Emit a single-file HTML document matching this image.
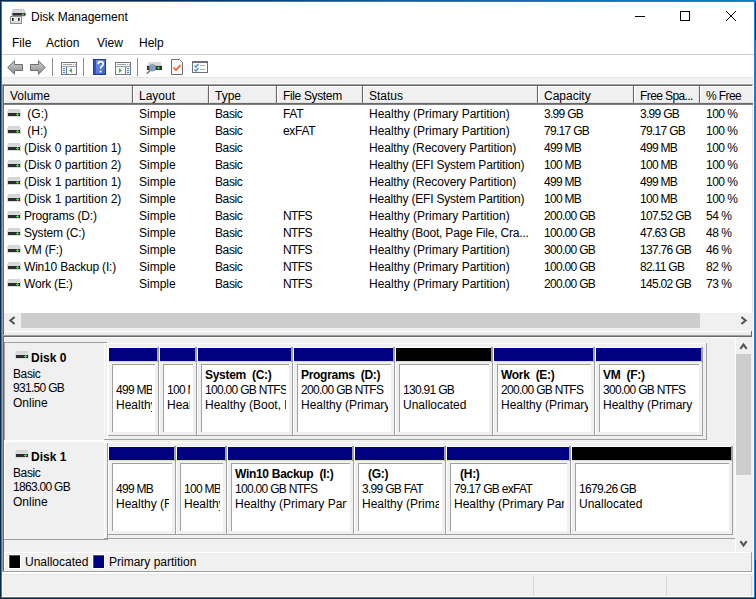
<!DOCTYPE html>
<html><head><meta charset="utf-8">
<style>
*{margin:0;padding:0;box-sizing:border-box}
html,body{width:756px;height:599px;overflow:hidden;background:#f0f0f0}
body{position:relative;font-family:"Liberation Sans",sans-serif;font-size:12px;color:#000}
.a{position:absolute}
.t{position:absolute;white-space:nowrap;line-height:17px;height:17px;margin-top:1px}
.b{font-weight:bold}
/* window frame */
#frame{left:0;top:0;width:756px;height:599px;border:1px solid #012b55;z-index:50;pointer-events:none}
#frame2{left:1px;top:1px;width:754px;height:597px;border:1px solid #1b84d8;z-index:50}

.hi{background:#f0f0f0;box-shadow:inset -1px -1px 0 #696969, inset 1px 1px 0 #fff, inset -2px -2px 0 #e3e3e3}
.cell{background:#f0f0f0;border-top:1px solid #fff;border-left:1px solid #fff;border-right:1px solid #a0a0a0;border-bottom:1px solid #a0a0a0}
.box{background:#fff;border-top:1px solid #a0a0a0;border-left:1px solid #a0a0a0}
</style></head><body>

<!-- title + menu white area -->
<div class="a" style="left:2px;top:2px;width:752px;height:52px;background:#fff"></div>
<div class="a" style="left:2px;top:54px;width:752px;height:1px;background:#cfcfcf"></div>
<div class="a" style="left:2px;top:55px;width:752px;height:22px;background:#fff"></div>
<div class="a" style="left:2px;top:77px;width:752px;height:1px;background:#e6e6e6"></div>

<!-- title icon -->
<svg class="a" style="left:10px;top:9px" width="16" height="15" viewBox="0 0 16 15">
  <path d="M3.5 0.5h10l1.5 3v3.5h-13v-3.5z" fill="#d6d8dc" stroke="#c2c4c8" stroke-width="1"/>
  <rect x="2.5" y="4" width="13" height="2.6" fill="#2e2e2e"/>
  <rect x="12" y="4.6" width="1.6" height="1.4" fill="#3cf03c"/>
  <rect x="0.5" y="7.5" width="11" height="7" fill="#ececec" stroke="#8f8f8f"/>
  <rect x="1" y="12" width="10" height="2" fill="#dcdcdc"/>
  <rect x="2" y="9" width="1.6" height="2.8" fill="#1a1a1a"/>
  <rect x="8" y="9" width="1.6" height="2.8" fill="#1a1a1a"/>
</svg>
<div class="t" style="left:31px;top:8px">Disk Management</div>

<!-- window buttons -->
<div class="a" style="left:635px;top:16px;width:10px;height:1px;background:#000"></div>
<div class="a" style="left:680px;top:11px;width:10px;height:10px;border:1px solid #000"></div>
<svg class="a" style="left:725px;top:10px" width="12" height="12" viewBox="0 0 12 12">
  <path d="M1 1L11 11M11 1L1 11" stroke="#000" stroke-width="1"/>
</svg>

<!-- menu -->
<div class="t" style="left:12px;top:34px">File</div>
<div class="t" style="left:46px;top:34px">Action</div>
<div class="t" style="left:97px;top:34px">View</div>
<div class="t" style="left:139px;top:34px">Help</div>

<!-- toolbar -->
<svg class="a" style="left:7px;top:60px" width="17" height="15" viewBox="0 0 17 15">
  <defs><linearGradient id="ga" x1="0" y1="0" x2="0" y2="1"><stop offset="0" stop-color="#cfcfcf"/><stop offset="1" stop-color="#8d8d8d"/></linearGradient></defs>
  <path d="M0.7 7.5L7.5 0.8V4.5H15.5V10.5H7.5V14.2Z" fill="url(#ga)" stroke="#6f6f6f" stroke-width="1" stroke-linejoin="round"/>
</svg>
<svg class="a" style="left:29px;top:60px" width="17" height="15" viewBox="0 0 17 15">
  <path d="M16.3 7.5L9.5 0.8V4.5H1.5V10.5H9.5V14.2Z" fill="url(#ga)" stroke="#6f6f6f" stroke-width="1" stroke-linejoin="round"/>
</svg>
<div class="a" style="left:52px;top:58px;width:1px;height:18px;background:#8a8a8a"></div>
<svg class="a" style="left:61px;top:62px" width="16" height="13" viewBox="0 0 16 13">
  <rect x="0.5" y="0.5" width="15" height="12" fill="#fafafa" stroke="#737880"/>
  <rect x="2" y="2" width="9" height="1" fill="#9ca1a8"/><rect x="12" y="2" width="1" height="1" fill="#9ca1a8"/><rect x="14" y="2" width="1" height="1" fill="#9ca1a8"/>
  <rect x="1" y="4" width="14" height="1" fill="#9ca1a8"/>
  <rect x="5" y="5" width="1" height="7" fill="#737880"/>
  <rect x="1" y="5" width="4" height="7" fill="#eef1f5"/>
  <rect x="2" y="6" width="2" height="1" fill="#3a8ad8"/><rect x="2" y="8" width="2" height="1" fill="#3a8ad8"/><rect x="2" y="10" width="2" height="1" fill="#3a8ad8"/>
  <path d="M8 8.5L11 6V11Z" fill="#2fbf2f"/>
</svg>
<div class="a" style="left:83px;top:58px;width:1px;height:18px;background:#8a8a8a"></div>
<svg class="a" style="left:93px;top:59px" width="13" height="16" viewBox="0 0 13 16">
  <defs><linearGradient id="gh" x1="0" y1="0" x2="1" y2="1"><stop offset="0" stop-color="#6d8fe8"/><stop offset="1" stop-color="#3f63c8"/></linearGradient></defs>
  <rect x="0" y="0" width="13" height="16" fill="#1d3a98"/>
  <rect x="1" y="1" width="2" height="14" fill="#2d55c8"/>
  <rect x="3" y="1" width="9" height="14" fill="url(#gh)"/>
  <path d="M5 5.2Q5.2 2.6 7.6 2.6Q10.2 2.6 10.2 4.9Q10.2 6.4 8.6 7.3Q7.6 7.9 7.6 9.8" fill="none" stroke="#fff" stroke-width="1.7"/>
  <circle cx="7.6" cy="12.6" r="1.1" fill="#fff"/>
</svg>
<svg class="a" style="left:115px;top:62px" width="16" height="13" viewBox="0 0 16 13">
  <rect x="0.5" y="0.5" width="15" height="12" fill="#fafafa" stroke="#737880"/>
  <rect x="2" y="2" width="9" height="1" fill="#9ca1a8"/><rect x="12" y="2" width="1" height="1" fill="#9ca1a8"/><rect x="14" y="2" width="1" height="1" fill="#9ca1a8"/>
  <rect x="1" y="4" width="14" height="1" fill="#9ca1a8"/>
  <rect x="10" y="5" width="1" height="7" fill="#737880"/>
  <rect x="11" y="5" width="4" height="7" fill="#eef1f5"/>
  <rect x="12" y="6" width="2" height="1" fill="#3a8ad8"/><rect x="12" y="8" width="2" height="1" fill="#3a8ad8"/><rect x="12" y="10" width="2" height="1" fill="#3a8ad8"/>
  <path d="M4 6V11L7 8.5Z" fill="#2fbf2f"/>
</svg>
<div class="a" style="left:137px;top:58px;width:1px;height:18px;background:#8a8a8a"></div>
<svg class="a" style="left:146px;top:61px" width="16" height="14" viewBox="0 0 16 14">
  <rect x="2" y="1" width="13" height="4" fill="#d8dadd"/>
  <rect x="1" y="4" width="15" height="1" fill="#c4c6c9"/>
  <rect x="1" y="5" width="15" height="4" fill="#2e2e2e"/>
  <rect x="11" y="6.5" width="3" height="1" fill="#2ce02c"/><rect x="12" y="5.5" width="1" height="3" fill="#2ce02c"/>
  <circle cx="6.5" cy="6.8" r="3.3" fill="#8fb2d6" fill-opacity="0.85" stroke="#7a8a99" stroke-width="0.9"/>
  <path d="M4.3 9.3L0.8 12.8" stroke="#5a6f85" stroke-width="1.4"/>
</svg>
<svg class="a" style="left:171px;top:59px" width="12" height="16" viewBox="0 0 12 16">
  <path d="M0.5 0.5H8.5L11.5 3.5V15.5H0.5Z" fill="#f7f7f7" stroke="#6e6e6e"/>
  <path d="M2.5 8.5L5 11L9.5 6" fill="none" stroke="#ef5b1c" stroke-width="1.6"/>
</svg>
<svg class="a" style="left:192px;top:61px" width="16" height="12" viewBox="0 0 16 12">
  <rect x="0.5" y="0.5" width="15" height="11" fill="#fff" stroke="#6e7078"/>
  <rect x="1" y="1" width="14" height="1" fill="#6e7078"/>
  <path d="M2.5 4.5L4 6L6.5 3M2.5 8.5L4 10L6.5 7" fill="none" stroke="#3a8de0" stroke-width="1.2"/>
  <rect x="8" y="4" width="5" height="1" fill="#b0b0b0"/><rect x="8" y="8" width="5" height="1" fill="#b0b0b0"/>
</svg>

<!-- ===== list pane ===== -->
<div class="a" style="left:2px;top:83px;width:751px;height:1px;background:#fafafa"></div>
<div class="a" style="left:2px;top:84px;width:751px;height:1px;background:#a0a0a0"></div>
<div class="a" style="left:3px;top:85px;width:750px;height:1px;background:#696969"></div>
<div class="a" style="left:2px;top:84px;width:1px;height:488px;background:#a0a0a0"></div>
<div class="a" style="left:3px;top:85px;width:1px;height:487px;background:#696969"></div>
<div class="a" style="left:4px;top:86px;width:749px;height:227px;background:#fff"></div>
<div class="a" style="left:753px;top:55px;width:1px;height:542px;background:#fff"></div>
<div class="a" style="left:752px;top:85px;width:1px;height:228px;background:#e3e3e3"></div>

<!-- header -->
<div class="a" style="left:0;top:0;width:753px;height:120px;overflow:hidden"><div class="a hi" style="left:4px;top:86px;width:129px;height:18px"></div>
<div class="t" style="left:10px;top:87px;">Volume</div>
<div class="a hi" style="left:133px;top:86px;width:76px;height:18px"></div>
<div class="t" style="left:139px;top:87px;">Layout</div>
<div class="a hi" style="left:209px;top:86px;width:68px;height:18px"></div>
<div class="t" style="left:215px;top:87px;">Type</div>
<div class="a hi" style="left:277px;top:86px;width:86px;height:18px"></div>
<div class="t" style="left:283px;top:87px;letter-spacing:-0.35px;">File System</div>
<div class="a hi" style="left:363px;top:86px;width:175px;height:18px"></div>
<div class="t" style="left:369px;top:87px;">Status</div>
<div class="a hi" style="left:538px;top:86px;width:96px;height:18px"></div>
<div class="t" style="left:544px;top:87px;">Capacity</div>
<div class="a hi" style="left:634px;top:86px;width:66px;height:18px"></div>
<div class="t" style="left:640px;top:87px;letter-spacing:-0.6px;">Free Spa...</div>
<div class="a hi" style="left:700px;top:86px;width:70px;height:18px"></div>
<div class="t" style="left:706px;top:87px;letter-spacing:-0.6px;">% Free</div></div><div class="a" style="left:4px;top:104px;width:749px;height:1px;background:#808080"></div>

<!-- rows -->
<svg class="a" style="left:7px;top:109px" width="14" height="9" viewBox="0 0 14 9"><rect x="1" y="0" width="12" height="3" fill="#d3d5d9"/><rect x="0" y="2" width="14" height="6" fill="#d9dadc"/><rect x="1" y="4" width="12" height="3" fill="#2c2c2c"/><rect x="9" y="5" width="3" height="1" fill="#33e233"/><rect x="10" y="4" width="1" height="3" fill="#33e233"/></svg>
<div class="t" style="left:24px;top:105px;">&nbsp;(G:)</div>
<div class="t" style="left:139px;top:105px;">Simple</div>
<div class="t" style="left:215px;top:105px;letter-spacing:-0.4px;">Basic</div>
<div class="t" style="left:283px;top:105px;letter-spacing:-0.3px;">FAT</div>
<div class="t" style="left:369px;top:105px;">Healthy (Primary Partition)</div>
<div class="t" style="left:544px;top:105px;letter-spacing:-0.7px;">3.99 GB</div>
<div class="t" style="left:640px;top:105px;letter-spacing:-0.7px;">3.99 GB</div>
<div class="t" style="left:706px;top:105px;letter-spacing:-0.5px;">100 %</div>
<svg class="a" style="left:7px;top:126px" width="14" height="9" viewBox="0 0 14 9"><rect x="1" y="0" width="12" height="3" fill="#d3d5d9"/><rect x="0" y="2" width="14" height="6" fill="#d9dadc"/><rect x="1" y="4" width="12" height="3" fill="#2c2c2c"/><rect x="9" y="5" width="3" height="1" fill="#33e233"/><rect x="10" y="4" width="1" height="3" fill="#33e233"/></svg>
<div class="t" style="left:24px;top:122px;">&nbsp;(H:)</div>
<div class="t" style="left:139px;top:122px;">Simple</div>
<div class="t" style="left:215px;top:122px;letter-spacing:-0.4px;">Basic</div>
<div class="t" style="left:283px;top:122px;letter-spacing:-0.3px;">exFAT</div>
<div class="t" style="left:369px;top:122px;">Healthy (Primary Partition)</div>
<div class="t" style="left:544px;top:122px;letter-spacing:-0.7px;">79.17 GB</div>
<div class="t" style="left:640px;top:122px;letter-spacing:-0.7px;">79.17 GB</div>
<div class="t" style="left:706px;top:122px;letter-spacing:-0.5px;">100 %</div>
<svg class="a" style="left:7px;top:143px" width="14" height="9" viewBox="0 0 14 9"><rect x="1" y="0" width="12" height="3" fill="#d3d5d9"/><rect x="0" y="2" width="14" height="6" fill="#d9dadc"/><rect x="1" y="4" width="12" height="3" fill="#2c2c2c"/><rect x="9" y="5" width="3" height="1" fill="#33e233"/><rect x="10" y="4" width="1" height="3" fill="#33e233"/></svg>
<div class="t" style="left:24px;top:139px;">(Disk 0 partition 1)</div>
<div class="t" style="left:139px;top:139px;">Simple</div>
<div class="t" style="left:215px;top:139px;letter-spacing:-0.4px;">Basic</div>
<div class="t" style="left:369px;top:139px;letter-spacing:-0.1px;">Healthy (Recovery Partition)</div>
<div class="t" style="left:544px;top:139px;letter-spacing:-0.7px;">499 MB</div>
<div class="t" style="left:640px;top:139px;letter-spacing:-0.7px;">499 MB</div>
<div class="t" style="left:706px;top:139px;letter-spacing:-0.5px;">100 %</div>
<svg class="a" style="left:7px;top:160px" width="14" height="9" viewBox="0 0 14 9"><rect x="1" y="0" width="12" height="3" fill="#d3d5d9"/><rect x="0" y="2" width="14" height="6" fill="#d9dadc"/><rect x="1" y="4" width="12" height="3" fill="#2c2c2c"/><rect x="9" y="5" width="3" height="1" fill="#33e233"/><rect x="10" y="4" width="1" height="3" fill="#33e233"/></svg>
<div class="t" style="left:24px;top:156px;">(Disk 0 partition 2)</div>
<div class="t" style="left:139px;top:156px;">Simple</div>
<div class="t" style="left:215px;top:156px;letter-spacing:-0.4px;">Basic</div>
<div class="t" style="left:369px;top:156px;letter-spacing:-0.2px;">Healthy (EFI System Partition)</div>
<div class="t" style="left:544px;top:156px;letter-spacing:-0.7px;">100 MB</div>
<div class="t" style="left:640px;top:156px;letter-spacing:-0.7px;">100 MB</div>
<div class="t" style="left:706px;top:156px;letter-spacing:-0.5px;">100 %</div>
<svg class="a" style="left:7px;top:177px" width="14" height="9" viewBox="0 0 14 9"><rect x="1" y="0" width="12" height="3" fill="#d3d5d9"/><rect x="0" y="2" width="14" height="6" fill="#d9dadc"/><rect x="1" y="4" width="12" height="3" fill="#2c2c2c"/><rect x="9" y="5" width="3" height="1" fill="#33e233"/><rect x="10" y="4" width="1" height="3" fill="#33e233"/></svg>
<div class="t" style="left:24px;top:173px;">(Disk 1 partition 1)</div>
<div class="t" style="left:139px;top:173px;">Simple</div>
<div class="t" style="left:215px;top:173px;letter-spacing:-0.4px;">Basic</div>
<div class="t" style="left:369px;top:173px;letter-spacing:-0.1px;">Healthy (Recovery Partition)</div>
<div class="t" style="left:544px;top:173px;letter-spacing:-0.7px;">499 MB</div>
<div class="t" style="left:640px;top:173px;letter-spacing:-0.7px;">499 MB</div>
<div class="t" style="left:706px;top:173px;letter-spacing:-0.5px;">100 %</div>
<svg class="a" style="left:7px;top:194px" width="14" height="9" viewBox="0 0 14 9"><rect x="1" y="0" width="12" height="3" fill="#d3d5d9"/><rect x="0" y="2" width="14" height="6" fill="#d9dadc"/><rect x="1" y="4" width="12" height="3" fill="#2c2c2c"/><rect x="9" y="5" width="3" height="1" fill="#33e233"/><rect x="10" y="4" width="1" height="3" fill="#33e233"/></svg>
<div class="t" style="left:24px;top:190px;">(Disk 1 partition 2)</div>
<div class="t" style="left:139px;top:190px;">Simple</div>
<div class="t" style="left:215px;top:190px;letter-spacing:-0.4px;">Basic</div>
<div class="t" style="left:369px;top:190px;letter-spacing:-0.2px;">Healthy (EFI System Partition)</div>
<div class="t" style="left:544px;top:190px;letter-spacing:-0.7px;">100 MB</div>
<div class="t" style="left:640px;top:190px;letter-spacing:-0.7px;">100 MB</div>
<div class="t" style="left:706px;top:190px;letter-spacing:-0.5px;">100 %</div>
<svg class="a" style="left:7px;top:211px" width="14" height="9" viewBox="0 0 14 9"><rect x="1" y="0" width="12" height="3" fill="#d3d5d9"/><rect x="0" y="2" width="14" height="6" fill="#d9dadc"/><rect x="1" y="4" width="12" height="3" fill="#2c2c2c"/><rect x="9" y="5" width="3" height="1" fill="#33e233"/><rect x="10" y="4" width="1" height="3" fill="#33e233"/></svg>
<div class="t" style="left:24px;top:207px;letter-spacing:-0.2px;">Programs (D:)</div>
<div class="t" style="left:139px;top:207px;">Simple</div>
<div class="t" style="left:215px;top:207px;letter-spacing:-0.4px;">Basic</div>
<div class="t" style="left:283px;top:207px;letter-spacing:-0.6px;">NTFS</div>
<div class="t" style="left:369px;top:207px;">Healthy (Primary Partition)</div>
<div class="t" style="left:544px;top:207px;letter-spacing:-0.7px;">200.00 GB</div>
<div class="t" style="left:640px;top:207px;letter-spacing:-0.7px;">107.52 GB</div>
<div class="t" style="left:706px;top:207px;letter-spacing:-0.5px;">54 %</div>
<svg class="a" style="left:7px;top:228px" width="14" height="9" viewBox="0 0 14 9"><rect x="1" y="0" width="12" height="3" fill="#d3d5d9"/><rect x="0" y="2" width="14" height="6" fill="#d9dadc"/><rect x="1" y="4" width="12" height="3" fill="#2c2c2c"/><rect x="9" y="5" width="3" height="1" fill="#33e233"/><rect x="10" y="4" width="1" height="3" fill="#33e233"/></svg>
<div class="t" style="left:24px;top:224px;letter-spacing:-0.2px;">System (C:)</div>
<div class="t" style="left:139px;top:224px;">Simple</div>
<div class="t" style="left:215px;top:224px;letter-spacing:-0.4px;">Basic</div>
<div class="t" style="left:283px;top:224px;letter-spacing:-0.6px;">NTFS</div>
<div class="t" style="left:369px;top:224px;letter-spacing:-0.2px;">Healthy (Boot, Page File, Cra...</div>
<div class="t" style="left:544px;top:224px;letter-spacing:-0.7px;">100.00 GB</div>
<div class="t" style="left:640px;top:224px;letter-spacing:-0.7px;">47.63 GB</div>
<div class="t" style="left:706px;top:224px;letter-spacing:-0.5px;">48 %</div>
<svg class="a" style="left:7px;top:245px" width="14" height="9" viewBox="0 0 14 9"><rect x="1" y="0" width="12" height="3" fill="#d3d5d9"/><rect x="0" y="2" width="14" height="6" fill="#d9dadc"/><rect x="1" y="4" width="12" height="3" fill="#2c2c2c"/><rect x="9" y="5" width="3" height="1" fill="#33e233"/><rect x="10" y="4" width="1" height="3" fill="#33e233"/></svg>
<div class="t" style="left:24px;top:241px;letter-spacing:-0.2px;">VM (F:)</div>
<div class="t" style="left:139px;top:241px;">Simple</div>
<div class="t" style="left:215px;top:241px;letter-spacing:-0.4px;">Basic</div>
<div class="t" style="left:283px;top:241px;letter-spacing:-0.6px;">NTFS</div>
<div class="t" style="left:369px;top:241px;">Healthy (Primary Partition)</div>
<div class="t" style="left:544px;top:241px;letter-spacing:-0.7px;">300.00 GB</div>
<div class="t" style="left:640px;top:241px;letter-spacing:-0.7px;">137.76 GB</div>
<div class="t" style="left:706px;top:241px;letter-spacing:-0.5px;">46 %</div>
<svg class="a" style="left:7px;top:262px" width="14" height="9" viewBox="0 0 14 9"><rect x="1" y="0" width="12" height="3" fill="#d3d5d9"/><rect x="0" y="2" width="14" height="6" fill="#d9dadc"/><rect x="1" y="4" width="12" height="3" fill="#2c2c2c"/><rect x="9" y="5" width="3" height="1" fill="#33e233"/><rect x="10" y="4" width="1" height="3" fill="#33e233"/></svg>
<div class="t" style="left:24px;top:258px;letter-spacing:-0.2px;">Win10 Backup (I:)</div>
<div class="t" style="left:139px;top:258px;">Simple</div>
<div class="t" style="left:215px;top:258px;letter-spacing:-0.4px;">Basic</div>
<div class="t" style="left:283px;top:258px;letter-spacing:-0.6px;">NTFS</div>
<div class="t" style="left:369px;top:258px;">Healthy (Primary Partition)</div>
<div class="t" style="left:544px;top:258px;letter-spacing:-0.7px;">100.00 GB</div>
<div class="t" style="left:640px;top:258px;letter-spacing:-0.7px;">82.11 GB</div>
<div class="t" style="left:706px;top:258px;letter-spacing:-0.5px;">82 %</div>
<svg class="a" style="left:7px;top:279px" width="14" height="9" viewBox="0 0 14 9"><rect x="1" y="0" width="12" height="3" fill="#d3d5d9"/><rect x="0" y="2" width="14" height="6" fill="#d9dadc"/><rect x="1" y="4" width="12" height="3" fill="#2c2c2c"/><rect x="9" y="5" width="3" height="1" fill="#33e233"/><rect x="10" y="4" width="1" height="3" fill="#33e233"/></svg>
<div class="t" style="left:24px;top:275px;letter-spacing:-0.2px;">Work (E:)</div>
<div class="t" style="left:139px;top:275px;">Simple</div>
<div class="t" style="left:215px;top:275px;letter-spacing:-0.4px;">Basic</div>
<div class="t" style="left:283px;top:275px;letter-spacing:-0.6px;">NTFS</div>
<div class="t" style="left:369px;top:275px;">Healthy (Primary Partition)</div>
<div class="t" style="left:544px;top:275px;letter-spacing:-0.7px;">200.00 GB</div>
<div class="t" style="left:640px;top:275px;letter-spacing:-0.7px;">145.02 GB</div>
<div class="t" style="left:706px;top:275px;letter-spacing:-0.5px;">73 %</div>

<!-- hscroll -->
<div class="a" style="left:4px;top:313px;width:749px;height:18px;background:#f0f0f0"></div>
<div class="a" style="left:21px;top:313px;width:679px;height:15px;background:#cdcdcd"></div>
<svg class="a" style="left:7px;top:316px" width="10" height="9" viewBox="0 0 10 9"><path d="M7.6 1L3.4 4.5L7.6 8" fill="none" stroke="#555" stroke-width="2.1"/></svg>
<svg class="a" style="left:739px;top:316px" width="10" height="9" viewBox="0 0 10 9"><path d="M2.4 1L6.6 4.5L2.4 8" fill="none" stroke="#555" stroke-width="2.1"/></svg>
<div class="a" style="left:4px;top:331px;width:747px;height:1px;background:#fff"></div>
<div class="a" style="left:4px;top:332px;width:747px;height:3px;background:#ececec"></div>
<div class="a" style="left:3px;top:335px;width:749px;height:1px;background:#a0a0a0"></div>
<div class="a" style="left:3px;top:336px;width:749px;height:1px;background:#696969"></div>
<div class="a" style="left:751px;top:331px;width:1px;height:6px;background:#696969"></div>

<!-- ===== graphical pane ===== -->
<div class="a" style="left:4px;top:337px;width:731px;height:1px;background:#fff"></div>
<div class="a" style="left:4px;top:331px;width:1px;height:4px;background:#fff"></div>
<div class="a" style="left:4px;top:337px;width:1px;height:5px;background:#fff"></div>
<div class="a" style="left:4px;top:343px;width:1px;height:97px;background:#a0a0a0"></div>
<div class="a" style="left:4px;top:342px;width:103px;height:1px;background:#a0a0a0"></div>
<div class="a" style="left:107px;top:343px;width:1px;height:97px;background:#fff"></div>
<div class="a" style="left:104px;top:343px;width:1px;height:96px;background:#fff"></div>
<svg class="a" style="left:15px;top:351px" width="14" height="9" viewBox="0 0 14 9"><rect x="1" y="0" width="12" height="3" fill="#d3d5d9"/><rect x="0" y="2" width="14" height="6" fill="#d9dadc"/><rect x="1" y="4" width="12" height="3" fill="#2c2c2c"/><rect x="9" y="5" width="3" height="1" fill="#33e233"/><rect x="10" y="4" width="1" height="3" fill="#33e233"/></svg>
<div class="t b" style="left:31px;top:349px">Disk 0</div>
<div class="t" style="left:13px;top:365px;letter-spacing:-0.4px;">Basic</div>
<div class="t" style="left:13px;top:379px;letter-spacing:-0.7px;">931.50 GB</div>
<div class="t" style="left:13px;top:394px;">Online</div>
<div class="a" style="left:104px;top:343px;width:603px;height:1px;background:#fff"></div>
<div class="a" style="left:706px;top:343px;width:1px;height:97px;background:#a0a0a0"></div>
<div class="a" style="left:104px;top:439px;width:603px;height:1px;background:#a0a0a0"></div>
<div class="a" style="left:108px;top:435px;width:595px;height:1px;background:#a0a0a0"></div>
<div class="a" style="left:108px;top:347px;width:51px;height:1px;background:#fff"></div>
<div class="a" style="left:108px;top:347px;width:1px;height:88px;background:#fff"></div>
<div class="a" style="left:158px;top:347px;width:1px;height:88px;background:#a0a0a0"></div>
<div class="a" style="left:109px;top:348px;width:48px;height:13px;background:#000080"></div>
<div class="a" style="left:157px;top:347px;width:1px;height:15px;background:#a0a0a0"></div>
<div class="a" style="left:109px;top:361px;width:48px;height:1px;background:#d8d8cc"></div>
<div class="a" style="left:112px;top:364px;width:43px;height:68px;background:#a0a0a0"></div>
<div class="a" style="left:113px;top:365px;width:42px;height:67px;background:#fff"></div>
<div class="a" style="left:113px;top:365px;width:39px;height:66px;overflow:hidden"><div class="t" style="left:3px;top:16px;letter-spacing:-0.7px;">499 MB</div><div class="t" style="left:3px;top:31px">Healthy (Recovery Partition)</div></div>
<div class="a" style="left:159px;top:347px;width:38px;height:1px;background:#fff"></div>
<div class="a" style="left:159px;top:347px;width:1px;height:88px;background:#fff"></div>
<div class="a" style="left:196px;top:347px;width:1px;height:88px;background:#a0a0a0"></div>
<div class="a" style="left:160px;top:348px;width:35px;height:13px;background:#000080"></div>
<div class="a" style="left:195px;top:347px;width:1px;height:15px;background:#a0a0a0"></div>
<div class="a" style="left:160px;top:361px;width:35px;height:1px;background:#d8d8cc"></div>
<div class="a" style="left:163px;top:364px;width:30px;height:68px;background:#a0a0a0"></div>
<div class="a" style="left:164px;top:365px;width:29px;height:67px;background:#fff"></div>
<div class="a" style="left:164px;top:365px;width:26px;height:66px;overflow:hidden"><div class="t" style="left:3px;top:16px;letter-spacing:-0.7px;">100 MB</div><div class="t" style="left:3px;top:31px">Healthy (EFI System Partition)</div></div>
<div class="a" style="left:197px;top:347px;width:96px;height:1px;background:#fff"></div>
<div class="a" style="left:197px;top:347px;width:1px;height:88px;background:#fff"></div>
<div class="a" style="left:292px;top:347px;width:1px;height:88px;background:#a0a0a0"></div>
<div class="a" style="left:198px;top:348px;width:93px;height:13px;background:#000080"></div>
<div class="a" style="left:291px;top:347px;width:1px;height:15px;background:#a0a0a0"></div>
<div class="a" style="left:198px;top:361px;width:93px;height:1px;background:#d8d8cc"></div>
<div class="a" style="left:201px;top:364px;width:88px;height:68px;background:#a0a0a0"></div>
<div class="a" style="left:202px;top:365px;width:87px;height:67px;background:#fff"></div>
<div class="a" style="left:202px;top:365px;width:84px;height:66px;overflow:hidden"><div class="t b" style="left:3px;top:1px;letter-spacing:-0.3px">System&nbsp;&nbsp;(C:)</div><div class="t" style="left:3px;top:16px;letter-spacing:-0.7px;">100.00 GB NTFS</div><div class="t" style="left:3px;top:31px">Healthy (Boot, Page File, Crash Dump, Primary Partition)</div></div>
<div class="a" style="left:293px;top:347px;width:102px;height:1px;background:#fff"></div>
<div class="a" style="left:293px;top:347px;width:1px;height:88px;background:#fff"></div>
<div class="a" style="left:394px;top:347px;width:1px;height:88px;background:#a0a0a0"></div>
<div class="a" style="left:294px;top:348px;width:99px;height:13px;background:#000080"></div>
<div class="a" style="left:393px;top:347px;width:1px;height:15px;background:#a0a0a0"></div>
<div class="a" style="left:294px;top:361px;width:99px;height:1px;background:#d8d8cc"></div>
<div class="a" style="left:297px;top:364px;width:94px;height:68px;background:#a0a0a0"></div>
<div class="a" style="left:298px;top:365px;width:93px;height:67px;background:#fff"></div>
<div class="a" style="left:298px;top:365px;width:90px;height:66px;overflow:hidden"><div class="t b" style="left:3px;top:1px;letter-spacing:-0.3px">Programs&nbsp;&nbsp;(D:)</div><div class="t" style="left:3px;top:16px;letter-spacing:-0.7px;">200.00 GB NTFS</div><div class="t" style="left:3px;top:31px">Healthy (Primary Partition)</div></div>
<div class="a" style="left:395px;top:347px;width:98px;height:1px;background:#fff"></div>
<div class="a" style="left:395px;top:347px;width:1px;height:88px;background:#fff"></div>
<div class="a" style="left:492px;top:347px;width:1px;height:88px;background:#a0a0a0"></div>
<div class="a" style="left:396px;top:348px;width:95px;height:13px;background:#000"></div>
<div class="a" style="left:491px;top:347px;width:1px;height:15px;background:#a0a0a0"></div>
<div class="a" style="left:396px;top:361px;width:95px;height:1px;background:#d8d8cc"></div>
<div class="a" style="left:399px;top:364px;width:90px;height:68px;background:#a0a0a0"></div>
<div class="a" style="left:400px;top:365px;width:89px;height:67px;background:#fff"></div>
<div class="a" style="left:400px;top:365px;width:86px;height:66px;overflow:hidden"><div class="t" style="left:3px;top:16px;letter-spacing:-0.7px;">130.91 GB</div><div class="t" style="left:3px;top:31px">Unallocated</div></div>
<div class="a" style="left:493px;top:347px;width:102px;height:1px;background:#fff"></div>
<div class="a" style="left:493px;top:347px;width:1px;height:88px;background:#fff"></div>
<div class="a" style="left:594px;top:347px;width:1px;height:88px;background:#a0a0a0"></div>
<div class="a" style="left:494px;top:348px;width:99px;height:13px;background:#000080"></div>
<div class="a" style="left:593px;top:347px;width:1px;height:15px;background:#a0a0a0"></div>
<div class="a" style="left:494px;top:361px;width:99px;height:1px;background:#d8d8cc"></div>
<div class="a" style="left:497px;top:364px;width:94px;height:68px;background:#a0a0a0"></div>
<div class="a" style="left:498px;top:365px;width:93px;height:67px;background:#fff"></div>
<div class="a" style="left:498px;top:365px;width:90px;height:66px;overflow:hidden"><div class="t b" style="left:3px;top:1px;letter-spacing:-0.3px">Work&nbsp;&nbsp;(E:)</div><div class="t" style="left:3px;top:16px;letter-spacing:-0.7px;">200.00 GB NTFS</div><div class="t" style="left:3px;top:31px">Healthy (Primary Partition)</div></div>
<div class="a" style="left:595px;top:347px;width:108px;height:1px;background:#fff"></div>
<div class="a" style="left:595px;top:347px;width:1px;height:88px;background:#fff"></div>
<div class="a" style="left:702px;top:347px;width:1px;height:88px;background:#a0a0a0"></div>
<div class="a" style="left:596px;top:348px;width:105px;height:13px;background:#000080"></div>
<div class="a" style="left:701px;top:347px;width:1px;height:15px;background:#a0a0a0"></div>
<div class="a" style="left:596px;top:361px;width:105px;height:1px;background:#d8d8cc"></div>
<div class="a" style="left:599px;top:364px;width:100px;height:68px;background:#a0a0a0"></div>
<div class="a" style="left:600px;top:365px;width:99px;height:67px;background:#fff"></div>
<div class="a" style="left:600px;top:365px;width:96px;height:66px;overflow:hidden"><div class="t b" style="left:3px;top:1px;letter-spacing:-0.3px">VM&nbsp;&nbsp;(F:)</div><div class="t" style="left:3px;top:16px;letter-spacing:-0.7px;">300.00 GB NTFS</div><div class="t" style="left:3px;top:31px">Healthy (Primary Partition)</div></div>
<div class="a" style="left:4px;top:440px;width:103px;height:2px;background:#fff"></div>
<div class="a" style="left:4px;top:441px;width:1px;height:98px;background:#fff"></div>
<div class="a" style="left:107px;top:442px;width:1px;height:97px;background:#a0a0a0"></div>
<div class="a" style="left:4px;top:539px;width:104px;height:1px;background:#a0a0a0"></div>
<div class="a" style="left:104px;top:442px;width:1px;height:96px;background:#fff"></div>
<svg class="a" style="left:15px;top:450px" width="14" height="9" viewBox="0 0 14 9"><rect x="1" y="0" width="12" height="3" fill="#d3d5d9"/><rect x="0" y="2" width="14" height="6" fill="#d9dadc"/><rect x="1" y="4" width="12" height="3" fill="#2c2c2c"/><rect x="9" y="5" width="3" height="1" fill="#33e233"/><rect x="10" y="4" width="1" height="3" fill="#33e233"/></svg>
<div class="t b" style="left:31px;top:448px">Disk 1</div>
<div class="t" style="left:13px;top:464px;letter-spacing:-0.4px;">Basic</div>
<div class="t" style="left:13px;top:478px;letter-spacing:-0.7px;">1863.00 GB</div>
<div class="t" style="left:13px;top:493px;">Online</div>
<div class="a" style="left:104px;top:442px;width:633px;height:1px;background:#fff"></div>
<div class="a" style="left:736px;top:442px;width:1px;height:97px;background:#a0a0a0"></div>
<div class="a" style="left:104px;top:538px;width:633px;height:1px;background:#a0a0a0"></div>
<div class="a" style="left:108px;top:534px;width:625px;height:1px;background:#a0a0a0"></div>
<div class="a" style="left:108px;top:446px;width:68px;height:1px;background:#fff"></div>
<div class="a" style="left:108px;top:446px;width:1px;height:88px;background:#fff"></div>
<div class="a" style="left:175px;top:446px;width:1px;height:88px;background:#a0a0a0"></div>
<div class="a" style="left:109px;top:447px;width:65px;height:13px;background:#000080"></div>
<div class="a" style="left:174px;top:446px;width:1px;height:15px;background:#a0a0a0"></div>
<div class="a" style="left:109px;top:460px;width:65px;height:1px;background:#d8d8cc"></div>
<div class="a" style="left:112px;top:463px;width:60px;height:68px;background:#a0a0a0"></div>
<div class="a" style="left:113px;top:464px;width:59px;height:67px;background:#fff"></div>
<div class="a" style="left:113px;top:464px;width:56px;height:66px;overflow:hidden"><div class="t" style="left:3px;top:16px;letter-spacing:-0.7px;">499 MB</div><div class="t" style="left:3px;top:31px">Healthy (Recovery Partition)</div></div>
<div class="a" style="left:176px;top:446px;width:51px;height:1px;background:#fff"></div>
<div class="a" style="left:176px;top:446px;width:1px;height:88px;background:#fff"></div>
<div class="a" style="left:226px;top:446px;width:1px;height:88px;background:#a0a0a0"></div>
<div class="a" style="left:177px;top:447px;width:48px;height:13px;background:#000080"></div>
<div class="a" style="left:225px;top:446px;width:1px;height:15px;background:#a0a0a0"></div>
<div class="a" style="left:177px;top:460px;width:48px;height:1px;background:#d8d8cc"></div>
<div class="a" style="left:180px;top:463px;width:43px;height:68px;background:#a0a0a0"></div>
<div class="a" style="left:181px;top:464px;width:42px;height:67px;background:#fff"></div>
<div class="a" style="left:181px;top:464px;width:39px;height:66px;overflow:hidden"><div class="t" style="left:3px;top:16px;letter-spacing:-0.7px;">100 MB</div><div class="t" style="left:3px;top:31px">Healthy (EFI System Partition)</div></div>
<div class="a" style="left:227px;top:446px;width:127px;height:1px;background:#fff"></div>
<div class="a" style="left:227px;top:446px;width:1px;height:88px;background:#fff"></div>
<div class="a" style="left:353px;top:446px;width:1px;height:88px;background:#a0a0a0"></div>
<div class="a" style="left:228px;top:447px;width:124px;height:13px;background:#000080"></div>
<div class="a" style="left:352px;top:446px;width:1px;height:15px;background:#a0a0a0"></div>
<div class="a" style="left:228px;top:460px;width:124px;height:1px;background:#d8d8cc"></div>
<div class="a" style="left:231px;top:463px;width:119px;height:68px;background:#a0a0a0"></div>
<div class="a" style="left:232px;top:464px;width:118px;height:67px;background:#fff"></div>
<div class="a" style="left:232px;top:464px;width:115px;height:66px;overflow:hidden"><div class="t b" style="left:3px;top:1px;letter-spacing:-0.3px">Win10 Backup&nbsp;&nbsp;(I:)</div><div class="t" style="left:3px;top:16px;letter-spacing:-0.7px;">100.00 GB NTFS</div><div class="t" style="left:3px;top:31px">Healthy (Primary Partition)</div></div>
<div class="a" style="left:354px;top:446px;width:92px;height:1px;background:#fff"></div>
<div class="a" style="left:354px;top:446px;width:1px;height:88px;background:#fff"></div>
<div class="a" style="left:445px;top:446px;width:1px;height:88px;background:#a0a0a0"></div>
<div class="a" style="left:355px;top:447px;width:89px;height:13px;background:#000080"></div>
<div class="a" style="left:444px;top:446px;width:1px;height:15px;background:#a0a0a0"></div>
<div class="a" style="left:355px;top:460px;width:89px;height:1px;background:#d8d8cc"></div>
<div class="a" style="left:358px;top:463px;width:84px;height:68px;background:#a0a0a0"></div>
<div class="a" style="left:359px;top:464px;width:83px;height:67px;background:#fff"></div>
<div class="a" style="left:359px;top:464px;width:80px;height:66px;overflow:hidden"><div class="t b" style="left:3px;top:1px;letter-spacing:-0.3px">&nbsp;&nbsp;(G:)</div><div class="t" style="left:3px;top:16px;letter-spacing:-0.7px;">3.99 GB FAT</div><div class="t" style="left:3px;top:31px">Healthy (Primary Partition)</div></div>
<div class="a" style="left:446px;top:446px;width:125px;height:1px;background:#fff"></div>
<div class="a" style="left:446px;top:446px;width:1px;height:88px;background:#fff"></div>
<div class="a" style="left:570px;top:446px;width:1px;height:88px;background:#a0a0a0"></div>
<div class="a" style="left:447px;top:447px;width:122px;height:13px;background:#000080"></div>
<div class="a" style="left:569px;top:446px;width:1px;height:15px;background:#a0a0a0"></div>
<div class="a" style="left:447px;top:460px;width:122px;height:1px;background:#d8d8cc"></div>
<div class="a" style="left:450px;top:463px;width:117px;height:68px;background:#a0a0a0"></div>
<div class="a" style="left:451px;top:464px;width:116px;height:67px;background:#fff"></div>
<div class="a" style="left:451px;top:464px;width:113px;height:66px;overflow:hidden"><div class="t b" style="left:3px;top:1px;letter-spacing:-0.3px">&nbsp;&nbsp;(H:)</div><div class="t" style="left:3px;top:16px;letter-spacing:-0.7px;">79.17 GB exFAT</div><div class="t" style="left:3px;top:31px">Healthy (Primary Partition)</div></div>
<div class="a" style="left:571px;top:446px;width:162px;height:1px;background:#fff"></div>
<div class="a" style="left:571px;top:446px;width:1px;height:88px;background:#fff"></div>
<div class="a" style="left:732px;top:446px;width:1px;height:88px;background:#a0a0a0"></div>
<div class="a" style="left:572px;top:447px;width:159px;height:13px;background:#000"></div>
<div class="a" style="left:731px;top:446px;width:1px;height:15px;background:#a0a0a0"></div>
<div class="a" style="left:572px;top:460px;width:159px;height:1px;background:#d8d8cc"></div>
<div class="a" style="left:575px;top:463px;width:154px;height:68px;background:#a0a0a0"></div>
<div class="a" style="left:576px;top:464px;width:153px;height:67px;background:#fff"></div>
<div class="a" style="left:576px;top:464px;width:150px;height:66px;overflow:hidden"><div class="t" style="left:3px;top:16px;letter-spacing:-0.7px;">1679.26 GB</div><div class="t" style="left:3px;top:31px">Unallocated</div></div>
<div class="a" style="left:735px;top:337px;width:1px;height:215px;background:#fff"></div>
<div class="a" style="left:736px;top:337px;width:16px;height:215px;background:#f0f0f0"></div>
<div class="a" style="left:736px;top:354px;width:15px;height:121px;background:#cdcdcd"></div>
<svg class="a" style="left:739px;top:341px" width="9" height="10" viewBox="0 0 9 10"><path d="M1.3 7.8L4.5 3.6L7.7 7.8" fill="none" stroke="#555" stroke-width="2.1"/></svg>
<svg class="a" style="left:739px;top:539px" width="9" height="10" viewBox="0 0 9 10"><path d="M1.3 2.2L4.5 6.4L7.7 2.2" fill="none" stroke="#555" stroke-width="2.1"/></svg>

<!-- legend & status -->
<div class="a" style="left:4px;top:552px;width:748px;height:1px;background:#fff"></div>
<div class="a" style="left:4px;top:552px;width:1px;height:19px;background:#fff"></div>
<div class="a" style="left:751px;top:552px;width:1px;height:20px;background:#a0a0a0"></div>
<div class="a" style="left:3px;top:571px;width:749px;height:1px;background:#a0a0a0"></div>
<div class="a" style="left:8px;top:554px;width:13px;height:15px;background:#fff"></div>
<div class="a" style="left:9px;top:555px;width:11px;height:13px;background:#000;border-left:1px solid #555;border-top:1px solid #555"></div>
<div class="t" style="left:25px;top:553px">Unallocated</div>
<div class="a" style="left:92px;top:554px;width:13px;height:15px;background:#fff"></div>
<div class="a" style="left:93px;top:555px;width:11px;height:13px;background:#000080;border-left:1px solid #555;border-top:1px solid #555"></div>
<div class="t" style="left:109px;top:553px">Primary partition</div>

<div class="a" style="left:2px;top:572px;width:752px;height:2px;background:#fff"></div>
<div class="a" style="left:2px;top:574px;width:752px;height:1px;background:#e6e6e6"></div>
<div class="a" style="left:2px;top:573px;width:1px;height:24px;background:#fff"></div>
<div class="a" style="left:2px;top:596px;width:752px;height:1px;background:#fff"></div>
<div class="a" style="left:533px;top:576px;width:1px;height:20px;background:#d9d9d9"></div>
<div class="a" style="left:666px;top:576px;width:1px;height:20px;background:#d9d9d9"></div>
<div class="a" style="left:751px;top:576px;width:1px;height:20px;background:#d9d9d9"></div>

<div id="frame" class="a"></div>
<div class="a" style="left:755px;top:40px;width:1px;height:520px;background:#0a7ec8;z-index:51"></div>
<div class="a" style="left:150px;top:0px;width:606px;height:1px;background:linear-gradient(90deg,#012b55,#0a5fae 40%,#0a7ec8);z-index:51"></div>
<div id="frame2" class="a"></div>
</body></html>
